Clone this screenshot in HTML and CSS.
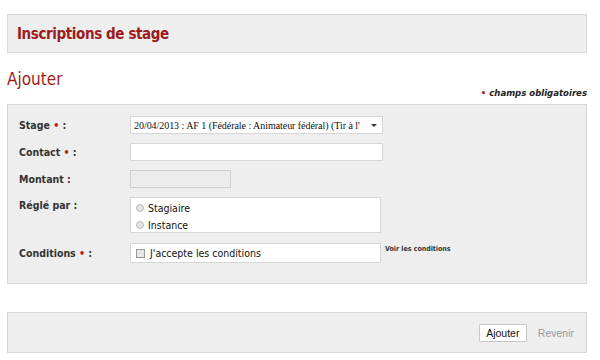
FILE: index.html
```html
<!DOCTYPE html>
<html lang="fr">
<head>
<meta charset="utf-8">
<title>Inscriptions de stage</title>
<link rel="stylesheet" href="styles.css">
</head>
<body>
<div class="page">
  <div class="title-bar"><h1>Inscriptions de stage</h1></div>
  <h2 class="subtitle">Ajouter</h2>
  <div class="legend"><span class="req">•</span> champs obligatoires</div>
  <div class="form-box">
    <div class="row">
      <label class="lbl">Stage <span class="req">•</span> :</label>
      <div class="select"><span class="select-text">20/04/2013 : AF 1 (Fédérale : Animateur fédéral) (Tir à l'</span><span class="arrow"></span></div>
    </div>
    <div class="row">
      <label class="lbl">Contact <span class="req">•</span> :</label>
      <div class="input"></div>
    </div>
    <div class="row">
      <label class="lbl">Montant :</label>
      <div class="input small disabled"></div>
    </div>
    <div class="row top">
      <label class="lbl">Réglé par :</label>
      <div class="choices">
        <div class="choice"><span class="radio"></span>Stagiaire</div>
        <div class="choice"><span class="radio"></span>Instance</div>
      </div>
    </div>
    <div class="row">
      <label class="lbl">Conditions <span class="req">•</span> :</label>
      <div class="check-box"><span class="check"></span>J'accepte les conditions</div>
      <a class="link">Voir les conditions</a>
    </div>
  </div>
  <div class="footer-bar">
    <button class="btn">Ajouter</button>
    <span class="back">Revenir</span>
  </div>
</div>
</body>
</html>
```

FILE: styles.css
```css
* { box-sizing: border-box; }
html, body { margin: 0; padding: 0; background: #fff; }
body { font-family: "DejaVu Sans Condensed", "DejaVu Sans", Verdana, sans-serif; color: #222; }
.page { padding: 14px 13px 0 7px; }
.title-bar {
  height: 39px;
  background: #eeeeee;
  border: 1px solid #dadada;
  display: flex;
  align-items: center;
  padding-left: 9px;
}
.title-bar h1 {
  margin: 0;
  font-size: 15px;
  font-weight: bold;
  color: #9b1b20;
  letter-spacing: -0.4px;
}
.subtitle {
  margin: 15px 0 0 0;
  font-size: 17px;
  font-weight: normal;
  color: #9b1b20;
  line-height: 22px;
}
.legend {
  text-align: right;
  font-size: 9.5px;
  font-style: italic;
  font-weight: bold;
  color: #222;
  line-height: 12px;
  margin-top: -3px;
}
.req { color: #c0141b; font-style: normal; }
.form-box {
  margin-top: 5px;
  height: 180px;
  background: #eeeeee;
  border: 1px solid #d8d8d8;
  padding: 11px 0 0 11px;
}
.row {
  display: flex;
  align-items: center;
  margin-bottom: 9px;
}
.row.top { align-items: flex-start; margin-bottom: 10px; }
.lbl {
  width: 111px;
  font-size: 10.5px;
  font-weight: bold;
  color: #333;
  line-height: 18px;
}
.row.top .lbl { line-height: 16px; }
.select {
  width: 253px;
  height: 18px;
  background: #fff;
  border: 1px solid #d6d6d6;
  display: flex;
  align-items: center;
  padding-left: 3px;
  font-family: "Liberation Serif", "Times New Roman", serif;
  font-size: 10px;
  letter-spacing: -0.05px;
  color: #111;
  white-space: nowrap;
}
.select-text { flex: 1; }
.arrow {
  flex: none;
  width: 0; height: 0;
  border-left: 3px solid transparent;
  border-right: 3px solid transparent;
  border-top: 3px solid #333;
  margin: 0 5px 0 4px;
}
.input {
  width: 253px;
  height: 18px;
  background: #fff;
  border: 1px solid #d6d6d6;
}
.input.small { width: 101px; }
.input.disabled { background: #ececec; border-color: #cfcfcf; }
.choices {
  width: 251px;
  height: 36px;
  background: #fff;
  border: 1px solid #d6d6d6;
  padding: 1px 0 0 5px;
}
.choice {
  display: flex;
  align-items: center;
  font-size: 10.5px;
  color: #111;
  height: 17px;
}
.radio {
  width: 8px; height: 8px;
  border-radius: 50%;
  border: 1px solid #bbb;
  background: #e4e4e4;
  margin-right: 4px;
}
.check-box {
  width: 251px;
  height: 20px;
  background: #fff;
  border: 1px solid #d6d6d6;
  display: flex;
  align-items: center;
  padding-left: 5px;
  font-size: 10.5px;
  color: #111;
}
.check {
  width: 9px; height: 9px;
  border: 1px solid #999;
  background: #e8e8e8;
  margin-right: 5px;
}
.link {
  margin-left: 4px;
  font-size: 7px;
  font-weight: bold;
  color: #333;
  align-self: flex-start;
  margin-top: 2px;
}
.footer-bar {
  margin-top: 28px;
  height: 41px;
  background: #eeeeee;
  border: 1px solid #d8d8d8;
  display: flex;
  align-items: center;
  justify-content: flex-end;
  padding-right: 12px;
}
.btn {
  font-family: "Liberation Sans", Arial, sans-serif;
  font-size: 10.5px;
  color: #111;
  background: #fff;
  border: 1px solid #c8c8c8;
  border-radius: 1px;
  height: 18px;
  width: 48px;
  padding: 0;
  margin-right: 11px;
}
.back {
  font-family: "Liberation Sans", Arial, sans-serif;
  font-size: 10.5px;
  color: #9a9a9a;
}
```
